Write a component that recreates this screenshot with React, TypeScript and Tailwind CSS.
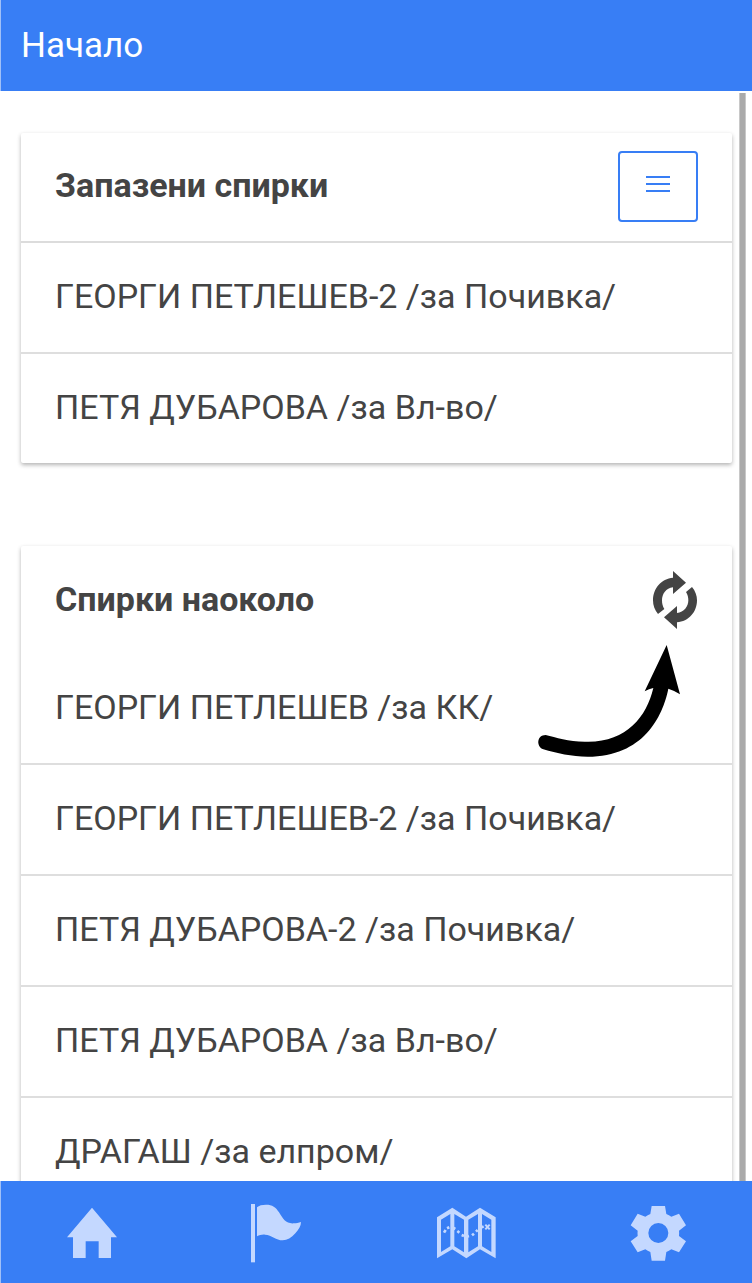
import type { ReactNode } from 'react';

const savedStops = ['ГЕОРГИ ПЕТЛЕШЕВ-2 /за Почивка/', 'ПЕТЯ ДУБАРОВА /за Вл-во/'];

const nearbyStops = [
  'ГЕОРГИ ПЕТЛЕШЕВ /за КК/',
  'ГЕОРГИ ПЕТЛЕШЕВ-2 /за Почивка/',
  'ПЕТЯ ДУБАРОВА-2 /за Почивка/',
  'ПЕТЯ ДУБАРОВА /за Вл-во/',
  'ДРАГАШ /за елпром/',
];

function StopCard({ title, action, stops, divided, children }: {
  title: string;
  action: ReactNode;
  stops: string[];
  divided?: boolean;
  children?: ReactNode;
}) {
  return (
    <section className="relative shrink-0 rounded-xs bg-white shadow-[0_2px_4px_rgba(0,0,0,0.3)]">
      <header className={`flex items-center justify-between px-[34px] ${divided ? 'h-[110px] border-b-2 border-[#dcdcdc] pb-0.5' : 'h-[108px]'}`}>
        <h2 className="pb-0.5 text-[34px] leading-10 font-bold">{title}</h2>
        {action}
      </header>
      <ul>
        {stops.map((stop) => (
          <li key={stop} className="flex h-[111px] items-center border-b-2 border-[#dedede] px-[34px] pb-1 text-[34px] leading-10 last:h-[109px] last:border-b-0">
            {stop}
          </li>
        ))}
      </ul>
      {children}
    </section>
  );
}

function Tab({ label, viewBox, children }: { label: string; viewBox: string; children: ReactNode }) {
  return (
    <a href="#" aria-label={label} className="flex flex-1 items-center justify-center">
      <svg viewBox={viewBox} className="size-[68px]" fill="currentColor" aria-hidden="true">
        {children}
      </svg>
    </a>
  );
}

export default function App() {
  return (
    <div className="flex h-screen flex-col overflow-hidden bg-white font-['Roboto',sans-serif] text-[#444444]">
      <header className="flex h-[91px] shrink-0 items-center border-l border-[#a0c0f8] bg-[#387ef5] px-5 text-white">
        <h1 className="text-[35px] leading-10">Начало</h1>
      </header>

      <main className="relative flex min-h-0 flex-1 flex-col gap-[83px] overflow-hidden pt-[42px] pr-5 pl-[21px]">
        <StopCard
          title="Запазени спирки"
          divided
          stops={savedStops}
          action={
            <button type="button" aria-label="Меню" className="flex h-[71px] w-20 items-center justify-center rounded-sm border-2 border-[#387ef5] pb-1 text-[#387ef5]">
              <svg viewBox="0 0 26 20" className="h-5 w-[26px]" stroke="currentColor" strokeWidth="2.2" aria-hidden="true">
                <path d="M1 3h24M1 10h24M1 17h24" />
              </svg>
            </button>
          }
        />
        <StopCard
          title="Спирки наоколо"
          stops={nearbyStops}
          action={
            <button type="button" aria-label="Обнови">
              <svg viewBox="396 63 138 174" className="h-[58px] w-[46px]" fill="currentColor" aria-hidden="true">
                <path d="M459 63L498 98L459 132V112C438 114 426 132 426 151C426 161 428 169 433 177L414 192C404 180 399 166 399 151C399 115 424 86 459 83Z" />
                <path d="M471 237L432 202L471 168V189C492 187 505 170 505 151C505 142 503 134 498 126L516 111C526 123 531 137 531 151C531 186 506 215 471 217Z" />
              </svg>
            </button>
          }
        >
          <svg viewBox="30 270 480 360" className="pointer-events-none absolute top-[94px] right-[42px] h-[120px] w-40 text-black" fill="currentColor" aria-hidden="true">
            <path d="M440 285L480 433Q462 421 445 416C428 500 370 620 203 620C155 620 110 610 70 598C48 590 50 555 77 555C110 563 150 577 205 575C320 575 380 500 400 414Q387 416 374 424Z" />
          </svg>
        </StopCard>
        <div className="absolute top-0.5 right-1.5 bottom-0 w-[7px] border-x border-[#c8c8c8] bg-[#aaaaaa]" />
      </main>

      <nav className="flex h-[102px] shrink-0 bg-[#387ef5] text-[#c4d8ff] shadow-[inset_1px_0_0_#a0c0f8]">
        <Tab label="Начало" viewBox="60 54 204 204">
          <path d="M156 83L231 172H213V234H176V184H137V234H99V172H81Z" />
        </Tab>
        <Tab label="Спирки" viewBox="84 54 204 204">
          <path d="M93 72H105V247H93Z" />
          <path d="M111 82C117 76 126 74 138 74C157 74 168 82 177 97C189 117 198 132 222 130C229 130 236 128 243 126C243 138 236 149 226 160C214 174 202 181 188 181C168 181 156 165 135 164C126 163 118 166 111 169Z" />
        </Tab>
        <Tab label="Карта" viewBox="78 54 204 204">
          <path fillRule="evenodd" d="M81 112L127 83L168 110L210 83L257 112V235L210 208L169 235L127 208L81 235ZM93 119V216L121 199V102ZM133 102V199L162 217V119ZM175 119V217L204 199V102ZM216 102V199L244 216V119Z" />
          <path d="M102 158L107 150M111 145L118 142M129 143L136 147M142 153L148 158M155 165L162 168M170 170L177 168M186 166L192 161M198 155L203 150M213 143L221 139" fill="none" stroke="currentColor" strokeWidth="8" />
          <path d="M226 134L239 148M239 134L226 148" stroke="currentColor" strokeWidth="6" />
        </Tab>
        <Tab label="Настройки" viewBox="72 54 204 204">
          <path fillRule="evenodd" d="M155 78H195L199 102Q207 105 214 110L237 101L258 136L237 152Q238 160 237 168L258 184L237 217L214 208Q207 213 199 216L195 242H155L151 216Q143 213 136 208L113 217L92 184L113 168Q112 160 113 152L92 136L113 101L136 110Q143 105 151 102ZM175 129A30 30 0 1 0 175 189A30 30 0 1 0 175 129Z" />
        </Tab>
      </nav>
    </div>
  );
}
